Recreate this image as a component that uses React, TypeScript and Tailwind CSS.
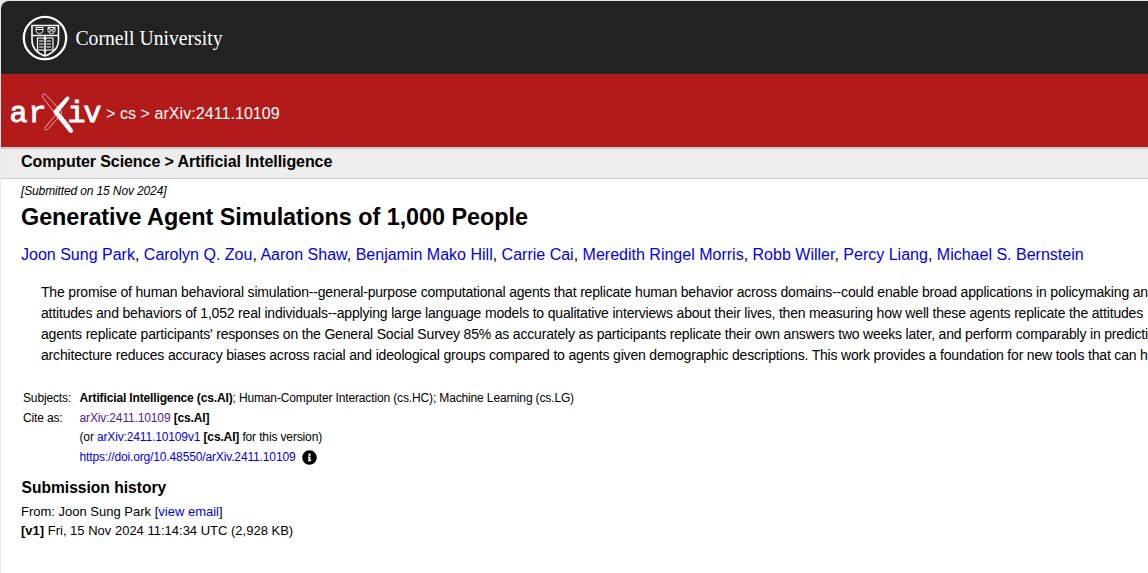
import { type ReactNode } from 'react';

function Link({ children, visited = false }: { children: ReactNode; visited?: boolean }) {
  return <a href="#" className={visited ? 'text-[#551a8b]' : 'text-[#0000ee]'}>{children}</a>;
}

const authors = ['Joon Sung Park', 'Carolyn Q. Zou', 'Aaron Shaw', 'Benjamin Mako Hill', 'Carrie Cai', 'Meredith Ringel Morris', 'Robb Willer', 'Percy Liang', 'Michael S. Bernstein'];

const abstractLines = [
  'The promise of human behavioral simulation--general-purpose computational agents that replicate human behavior across domains--could enable broad applications in policymaking an',
  'attitudes and behaviors of 1,052 real individuals--applying large language models to qualitative interviews about their lives, then measuring how well these agents replicate the attitudes',
  "agents replicate participants' responses on the General Social Survey 85% as accurately as participants replicate their own answers two weeks later, and perform comparably in predicti",
  'architecture reduces accuracy biases across racial and ideological groups compared to agents given demographic descriptions. This work provides a foundation for new tools that can h',
];

function CornellSeal() {
  return (
    <svg className="h-[46px] w-[46px] shrink-0" viewBox="0 0 46 46" fill="none" stroke="white">
      <circle cx="23" cy="23" r="21.2" strokeWidth="2.300" />
      <path d="M10 10.500H36.500V25C36.500 34 30 38.500 23 41C16 38.500 10 34 10 25Z" strokeWidth="1.6" />
      <path d="M10 20.500H36.500M23 20.500V41" strokeWidth="1.5" />
      <path d="M14 12.500H21V15.500C21 17.500 19 18.500 17.500 18.500S14 17.500 14 15.500ZM26 12.500H33V15.500C33 17.500 31 18.500 29.500 18.500S26 17.500 26 15.500ZM14 14.500H21M26 13L32 17M33 13L27 17" strokeWidth="1" />
      <path d="M15.500 23H21L23 24L25 23H31V35H25L23 36L21 35H15.500Z" strokeWidth="1.2" />
      <path d="M17 26H21.500M17 29H21.500M17 32H21.500M24.500 26H29M24.500 29H29M24.500 32H29" strokeWidth="1.2" />
    </svg>
  );
}

function ArxivLogo() {
  return (
    <svg className="h-[42px] w-[92px] shrink-0" viewBox="0 0 92 42" fill="white">
      <g fontFamily="Liberation Mono" fontSize="30" stroke="white" strokeWidth="0.9">
        <text x="-0.500 18.500" y="28.500">ar</text>
        <text x="57.500 73.500" y="28.500">iv</text>
      </g>
      <path d="M33 1.500C34.500 .500 36 1.500 37 3L51 18C52.500 20 51.500 21 50 22.500L38 36C36 38.500 34 36.500 35.500 34L46 21.500L33.500 5.500C32 3.500 32 2.500 33 1.500Z" fill="none" stroke="#efbcbc" strokeWidth="0.9" />
      <path d="M56.300 4C58 2.500 60.500 4 59 6.500L49 19L60 32.500L63 37C63.500 39.500 61 41 59 39L44.500 21C43 19 43 17.500 45 16.200Z" />
    </svg>
  );
}

export default function App() {
  return (
    <div className="h-[573px] w-[1148px] overflow-hidden bg-[#e8e8e8] pt-px pl-px font-['Liberation_Sans',Arial,sans-serif] text-black">
      <div className="h-full overflow-hidden rounded-tl-[8px] bg-white whitespace-nowrap">
        <header className="flex h-[73px] items-center bg-[#222] pl-[21px]">
          <CornellSeal />
          <svg className="ml-[7px] h-8 w-[160px]" viewBox="0 0 160 32"><text x="0.5" y="23" textLength="147" lengthAdjust="spacingAndGlyphs" fill="white" fontFamily="Liberation Serif" fontSize="21">Cornell University</text></svg>
        </header>
        <div className="flex h-[73px] items-center bg-[#b31b1b] pl-[9px] text-[16px] text-white">
          <div className="pt-[7px]"><ArxivLogo /></div>
          <span className="ml-[4px] pt-[6px] tracking-[0.065px]">&gt; cs &gt; arXiv:2411.10109</span>
        </div>
        <div className="h-8 border-t-2 border-b border-[#ccc] bg-[#ededed] pl-5 text-[16px] leading-[25px] font-bold tracking-[-0.08px]">Computer Science &gt; Artificial Intelligence</div>
        <main className="pl-5">
          <p className="h-[22px] text-[12px] leading-[24px] tracking-[-0.13px] italic">[Submitted on 15 Nov 2024]</p>
          <h1 className="h-[32px] text-[23.400px] leading-[32px] font-bold tracking-[-0.04px]">Generative Agent Simulations of 1,000 People</h1>
          <p className="mt-[10px] h-[24px] text-[16px] leading-[24px] tracking-[0.005px]">
            {authors.map((a, i) => <span key={a}>{i > 0 && ', '}<Link>{a}</Link></span>)}
          </p>
          <div className="mt-[15px] pl-5 text-[14px] leading-[21px] tracking-[-0.183px]">
            {abstractLines.map((l) => <p key={l}>{l}</p>)}
          </div>
          <div className="mt-[23px] grid grid-cols-[56.500px_1fr] pl-[2px] text-[12px] leading-[19.500px] tracking-[-0.14px]">
            <span>Subjects:</span><span><b>Artificial Intelligence (cs.AI)</b>; Human-Computer Interaction (cs.HC); Machine Learning (cs.LG)</span>
            <span>Cite as:</span><span><Link visited>arXiv:2411.10109</Link> <b>[cs.AI]</b></span>
            <span /><span>(or <Link>arXiv:2411.10109v1</Link> <b>[cs.AI]</b> for this version)</span>
            <span /><span className="flex items-center"><Link>https://doi.org/10.48550/arXiv.2411.10109</Link>
              <svg className="ml-[7px] h-[15px] w-[15px]" viewBox="0 0 512 512"><path d="M256 8C119 8 8 119 8 256s111 248 248 248 248-111 248-248S393 8 256 8zm0 110c23 0 42 19 42 42s-19 42-42 42-42-19-42-42 19-42 42-42zm56 254c0 7-5 12-12 12h-88c-7 0-12-5-12-12v-24c0-7 5-12 12-12h12v-64h-12c-7 0-12-5-12-12v-24c0-7 5-12 12-12h64c7 0 12 5 12 12v100h12c7 0 12 5 12 12z" /></svg>
            </span>
          </div>
          <h2 className="mt-[9px] h-[24px] pl-[0.500px] text-[15.600px] leading-[24px] font-bold">Submission history</h2>
          <div className="mt-[2px] text-[13px] leading-[19px]">
            <p>From: Joon Sung Park [<Link>view email</Link>]</p>
            <p><b>[v1]</b> Fri, 15 Nov 2024 11:14:34 UTC (2,928 KB)</p>
          </div>
        </main>
      </div>
    </div>
  );
}
